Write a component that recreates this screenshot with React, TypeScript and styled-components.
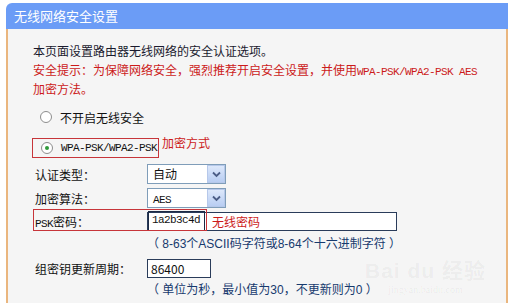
import styled, { createGlobalStyle } from "styled-components";

const GlobalStyle = createGlobalStyle`
    html, body {
        margin: 0;
        padding: 0;
        background: #ffffff;
    }
    body {
        font-family: "Noto Sans CJK SC", "Liberation Sans", sans-serif;
        font-size: 12px;
        color: #111;
    }
`;

const Panel = styled.div`
    position: relative;
    margin: 3px 0 0 6px;
    width: 502px;
`;

const TitleBar = styled.div`
    height: 26px;
    background: #6b9cf6;
    border-top-left-radius: 6px;
    color: #ffffff;
    font-size: 13px;
    line-height: 26px;
    padding-left: 8px;
`;

const Body = styled.div`
    background: #f5f5f5;
    border-left: 2px solid #eab67e;
    border-right: 2px solid #eab67e;
    padding: 12px 0 0 25px;
    height: 274px;
    box-sizing: border-box;
`;

const Line = styled.div<{ $red?: boolean }>`
    height: 19px;
    line-height: 19px;
    color: ${(p) => (p.$red ? "#cc1a1a" : "#1a1a2e")};
    white-space: nowrap;
`;

// SimSun-like ascii: 6px per character
const Mono = styled.span`
    font-family: "Liberation Mono", "DejaVu Sans Mono", monospace;
    font-size: 11px;
    letter-spacing: -0.6px;
    line-height: 1;
`;

const RadioRow = styled.div`
    display: flex;
    align-items: center;
    height: 20px;
    margin-top: 9px;
    padding-left: 7px;
    gap: 8px;
`;

const RadioBox = styled.div`
    display: inline-flex;
    align-items: center;
    gap: 8px;
    height: 18px;
    margin: 11px 0 0 -1px;
    padding: 0 1px 0 8px;
    border: 1px solid #c7353a;
`;

const Radio = styled.span<{ $checked?: boolean }>`
    position: relative;
    display: inline-block;
    width: 10px;
    height: 10px;
    border-radius: 50%;
    border: 1px solid #8d8d8d;
    background: #ffffff;
    &::after {
        content: "";
        display: ${(p) => (p.$checked ? "block" : "none")};
        position: absolute;
        left: 3px;
        top: 3px;
        width: 4px;
        height: 4px;
        border-radius: 50%;
        background: #2f9a3a;
    }
`;

const WpaLine = styled.div`
    display: flex;
    align-items: center;
`;

const RedNote = styled.span`
    color: #cc1a1a;
    margin-left: 3px;
`;

const Form = styled.div`
    margin-top: 4px;
    padding-left: 2px;
`;

const Row = styled.div<{ $h?: number }>`
    position: relative;
    display: grid;
    grid-template-columns: 112px 1fr;
    align-items: center;
    height: ${(p) => p.$h ?? 24}px;
`;

const Label = styled.div`
    color: #111;
`;

const Select = styled.div`
    display: flex;
    width: 79px;
    height: 20px;
    box-sizing: border-box;
    border: 1px solid #7f9db9;
    background: #ffffff;
`;

const SelectText = styled.div`
    flex: 1;
    padding-left: 5px;
    line-height: 18px;
`;

const SelectButton = styled.div`
    width: 16px;
    display: flex;
    align-items: center;
    justify-content: center;
    border: 1px solid #b6c8ea;
    background: linear-gradient(#dde8fb, #b8cdf2);
`;

const TextInput = styled.div<{ $w: number }>`
    position: relative;
    width: ${(p) => p.$w}px;
    height: 19px;
    box-sizing: border-box;
    border: 1px solid #2a3c5a;
    background: #ffffff;
    display: flex;
    align-items: center;
`;

const InputValue = styled.span`
    padding-left: 3px;
`;

const ValueBox = styled.span`
    display: flex;
    align-items: center;
    height: 19px;
    margin-top: -2px;
    padding: 0 4px 0 3px;
    border: 1px solid #1c2a45;
    border-bottom: none;
    box-sizing: border-box;
`;

const PskNote = styled.span`
    color: #cc1a1a;
    margin-left: 7px;
`;

const Highlight = styled.div`
    position: absolute;
    left: -2px;
    top: -1px;
    width: 174px;
    height: 22px;
    box-sizing: border-box;
    border: 1px solid #c7353a;
    pointer-events: none;
`;

const Hint = styled.div<{ $h: number }>`
    height: ${(p) => p.$h}px;
    line-height: ${(p) => p.$h}px;
    padding-left: 112px;
    color: #173a6e;
    font-family: "Liberation Sans", "Noto Sans CJK SC", sans-serif;
    white-space: nowrap;
`;

const Watermark = styled.div`
    position: absolute;
    right: 22px;
    bottom: 6px;
    display: flex;
    flex-direction: column;
    align-items: center;
    color: rgba(0, 0, 0, 0.05);
    pointer-events: none;
`;

const WatermarkMain = styled.div`
    font-family: "Liberation Sans", "Noto Sans CJK SC", sans-serif;
    font-size: 21px;
    font-weight: bold;
    letter-spacing: 1px;
    line-height: 24px;
`;

const WatermarkSub = styled.div`
    font-family: "Liberation Serif", serif;
    font-size: 10px;
    line-height: 14px;
`;

function Chevron() {
    return (
        <svg width="9" height="7" viewBox="0 0 9 7">
            <path d="M1 1.5 L4.5 5 L8 1.5" fill="none" stroke="#4b5d86" strokeWidth="1.8" />
        </svg>
    );
}

export default function App() {
    return (
        <>
            <GlobalStyle />
            <Panel>
                <TitleBar>无线网络安全设置</TitleBar>
                <Body>
                    <Line>本页面设置路由器无线网络的安全认证选项。</Line>
                    <Line $red>
                        安全提示：为保障网络安全，强烈推荐开启安全设置，并使用<Mono>WPA-PSK/WPA2-PSK AES</Mono>
                    </Line>
                    <Line $red>加密方法。</Line>
                    <RadioRow>
                        <Radio />
                        <span>不开启无线安全</span>
                    </RadioRow>
                    <WpaLine>
                        <RadioBox>
                            <Radio $checked />
                            <Mono>WPA-PSK/WPA2-PSK</Mono>
                        </RadioBox>
                        <RedNote>加密方式</RedNote>
                    </WpaLine>
                    <Form>
                        <Row>
                            <Label>认证类型：</Label>
                            <Select>
                                <SelectText>自动</SelectText>
                                <SelectButton><Chevron /></SelectButton>
                            </Select>
                        </Row>
                        <Row>
                            <Label>加密算法：</Label>
                            <Select>
                                <SelectText><Mono>AES</Mono></SelectText>
                                <SelectButton><Chevron /></SelectButton>
                            </Select>
                        </Row>
                        <Row $h={22}>
                            <Label><Mono>PSK</Mono>密码：</Label>
                            <TextInput $w={250}>
                                <ValueBox><Mono>1a2b3c4d</Mono></ValueBox>
                                <PskNote>无线密码</PskNote>
                            </TextInput>
                            <Highlight />
                        </Row>
                        <Hint $h={24}>（ 8-63个ASCII码字符或8-64个十六进制字符 ）</Hint>
                        <Row>
                            <Label>组密钥更新周期：</Label>
                            <TextInput $w={64}>
                                <InputValue>86400</InputValue>
                            </TextInput>
                        </Row>
                        <Hint $h={20}>（ 单位为秒，最小值为30，不更新则为0 ）</Hint>
                    </Form>
                </Body>
                <Watermark>
                    <WatermarkMain>Bai du 经验</WatermarkMain>
                    <WatermarkSub>jingyan.baidu.com</WatermarkSub>
                </Watermark>
            </Panel>
        </>
    );
}
